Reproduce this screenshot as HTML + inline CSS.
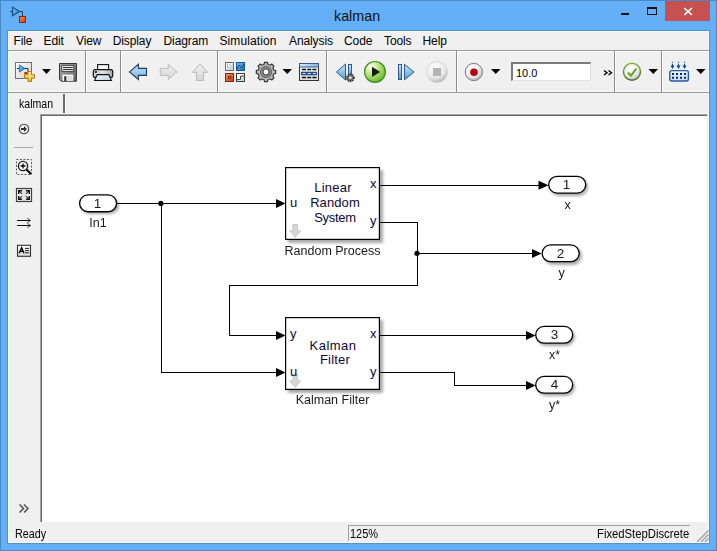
<!DOCTYPE html>
<html><head><meta charset="utf-8">
<style>
*{margin:0;padding:0;box-sizing:border-box}
html,body{width:717px;height:551px;overflow:hidden;background:#64b0f8}
body{position:relative;font-family:"Liberation Sans",sans-serif;font-size:12px;color:#000}
.a{position:absolute;white-space:nowrap}
#frame{left:0;top:0;width:717px;height:551px;background:#64b0f8;border:1px solid #4a88c4}
#iframe{left:7px;top:30px;width:703px;height:514px;border:1px solid #4a94dc}
#title{left:334px;top:8px;font-size:14.3px;color:#101010}
#client{left:8px;top:31px;width:701px;height:512px;background:#f0f0f0;border:1px solid #fafafa}
.menu{top:34px;font-size:12px;color:#000;letter-spacing:-0.1px}
.sep{background:#989898}
.tsep{position:absolute;top:51px;width:1px;height:41px;background:#8c8c8c;box-shadow:1px 0 0 #ffffff}
.st{font-size:12px;color:#000;top:527px;transform-origin:0 0}
svg{position:absolute;overflow:visible}
</style></head><body>
<div id="frame" class="a"></div>
<div id="iframe" class="a"></div>
<!-- title bar icon -->
<svg style="left:0;top:0" width="30" height="30">
 <defs><linearGradient id="tg" x1="0" y1="0" x2="1" y2="1"><stop offset="0" stop-color="#70d4f8"/><stop offset="1" stop-color="#1a78c0"/></linearGradient>
 <linearGradient id="rg" x1="0" y1="0" x2="1" y2="1"><stop offset="0" stop-color="#f89050"/><stop offset="1" stop-color="#d83a10"/></linearGradient></defs>
 <path d="M10 11.5H13M19 11.5H22.5V16" stroke="#3a3a3a" stroke-width="1" fill="none"/>
 <path d="M12.5 7.3L12.5 15.7L19.6 11.5Z" fill="url(#tg)" stroke="#14508a" stroke-width="1.2"/>
 <rect x="19.5" y="16.5" width="6" height="6" fill="url(#rg)" stroke="#8a2a08" stroke-width="1"/>
</svg>
<div id="title" class="a">kalman</div>
<!-- window buttons -->
<div class="a" style="left:621px;top:13px;width:8px;height:2px;background:#111"></div>
<div class="a" style="left:647px;top:7px;width:10px;height:8px;border:1px solid #111;border-top-width:2px"></div>
<div class="a" style="left:665px;top:1px;width:45px;height:20px;background:#c75050"></div>
<svg style="left:665px;top:1px" width="45" height="20"><path d="M19.3 7.2L26.9 13.9M26.9 7.2L19.3 13.9" stroke="#fff" stroke-width="1.55"/></svg>

<div id="client" class="a"></div>
<!-- menu -->
<div class="a menu" style="left:13.5px">File</div>
<div class="a menu" style="left:43.5px">Edit</div>
<div class="a menu" style="left:76px">View</div>
<div class="a menu" style="left:112.7px">Display</div>
<div class="a menu" style="left:163.5px">Diagram</div>
<div class="a menu" style="left:219.5px;letter-spacing:0.1px">Simulation</div>
<div class="a menu" style="left:289px">Analysis</div>
<div class="a menu" style="left:344px">Code</div>
<div class="a menu" style="left:384px">Tools</div>
<div class="a menu" style="left:422.5px">Help</div>
<div class="a sep" style="left:8px;top:50px;width:701px;height:1px"></div>
<div class="a" style="left:8px;top:51px;width:701px;height:1px;background:#fafafa"></div>
<div class="a" style="left:8px;top:91px;width:701px;height:1px;background:#fafafa"></div>
<!-- toolbar separators -->
<div class="tsep" style="left:85px"></div>
<div class="tsep" style="left:120px"></div>
<div class="tsep" style="left:217px"></div>
<div class="tsep" style="left:326px"></div>
<div class="tsep" style="left:456px"></div>
<div class="tsep" style="left:614px"></div>
<div class="tsep" style="left:661px"></div>
<div class="a sep" style="left:8px;top:92px;width:701px;height:1px"></div>

<!-- toolbar icons -->
<svg id="tb" style="left:0;top:0" width="717" height="100">
 <defs>
  <linearGradient id="g_box" x1="0" y1="0" x2="1" y2="1"><stop offset="0" stop-color="#ffffff"/><stop offset="1" stop-color="#d0d0d0"/></linearGradient>
  <linearGradient id="g_yel" x1="0" y1="0" x2="0" y2="1"><stop offset="0" stop-color="#fff6b0"/><stop offset="1" stop-color="#f0b820"/></linearGradient>
  <linearGradient id="g_blu" x1="0" y1="0" x2="0" y2="1"><stop offset="0" stop-color="#c8e4f8"/><stop offset="1" stop-color="#5a9ad0"/></linearGradient>
  <linearGradient id="g_gry" x1="0" y1="0" x2="0" y2="1"><stop offset="0" stop-color="#f0f0f0"/><stop offset="1" stop-color="#d4d4d4"/></linearGradient>
  <radialGradient id="g_grn" cx="0.3" cy="0.25" r="0.85"><stop offset="0" stop-color="#ffffff"/><stop offset="0.3" stop-color="#d0f0a0"/><stop offset="0.75" stop-color="#88cc48"/><stop offset="1" stop-color="#5aa82a"/></radialGradient>
  <radialGradient id="g_wht" cx="0.4" cy="0.3" r="0.7"><stop offset="0" stop-color="#ffffff"/><stop offset="0.7" stop-color="#e8e8e8"/><stop offset="1" stop-color="#b8b8b8"/></radialGradient>
  <radialGradient id="g_gear" cx="0.5" cy="0.5" r="0.5"><stop offset="0" stop-color="#505050"/><stop offset="0.5" stop-color="#a0a0a0"/><stop offset="1" stop-color="#707070"/></radialGradient>
 </defs>
 <!-- new model/library icon -->
 <rect x="15.5" y="62.5" width="16" height="16" fill="url(#g_box)" stroke="#707070"/>
 <path d="M17 68.5H19.5M24.5 68.5H28V72" stroke="#202020" fill="none"/>
 <linearGradient id="g_nt" x1="0" y1="0" x2="1" y2="1"><stop offset="0" stop-color="#70d0f8"/><stop offset="1" stop-color="#1a70c0"/></linearGradient>
 <path d="M19.3 64.8V72.2L25 68.5Z" fill="url(#g_nt)" stroke="#1a5a98" stroke-width="0.7"/>
 <rect x="24.3" y="72" width="3.2" height="2.4" fill="#d03010"/>
 <path d="M28 71.5H31.5V74.7H34.6V78.2H31.5V81.4H28V78.2H24.6V74.7H28Z" fill="url(#g_yel)" stroke="#a87010" stroke-width="0.9"/>
 <path d="M42 69H51L46.5 74Z" fill="#000"/>
 <!-- save -->
 <linearGradient id="g_fl" x1="0" y1="0" x2="1" y2="1"><stop offset="0" stop-color="#b4b4b4"/><stop offset="1" stop-color="#5a5a5a"/></linearGradient>
 <path d="M59.5 63.5H76.5V81.2H61.3L59.5 79.4Z" fill="url(#g_fl)" stroke="#383838"/>
 <rect x="61.8" y="65.3" width="12" height="6" fill="#ffffff" stroke="#303030" stroke-width="0.9"/>
 <path d="M63 67.4H72.8M63 69.4H72.8" stroke="#000" stroke-width="0.9"/>
 <rect x="62.5" y="74.6" width="10.8" height="6.2" fill="#ffffff"/>
 <rect x="64.3" y="76.2" width="2" height="4.8" fill="#202020"/>
 <rect x="67.2" y="75.6" width="5.4" height="4.6" fill="#dedede"/>
 <!-- print -->
 <linearGradient id="g_pr" x1="0" y1="0" x2="1" y2="0"><stop offset="0" stop-color="#c8c8c8"/><stop offset="0.5" stop-color="#e4e4e4"/><stop offset="1" stop-color="#a8a8a8"/></linearGradient>
 <linearGradient id="g_pt" x1="0" y1="0" x2="1" y2="1"><stop offset="0" stop-color="#f4f8fa"/><stop offset="1" stop-color="#b8d4e0"/></linearGradient>
 <rect x="97.6" y="64.6" width="11" height="5" fill="#f4f6f8" stroke="#101010" stroke-width="1.1"/>
 <path d="M95.2 69.6H110.8Q112.7 69.6 112.7 71.5V75.8Q112.7 77.4 111.2 77.4H94.8Q93.3 77.4 93.3 75.8V71.5Q93.3 69.6 95.2 69.6Z" fill="url(#g_pr)" stroke="#101010" stroke-width="1.2"/>
 <rect x="95" y="71.2" width="1.8" height="1.6" fill="#000"/>
 <path d="M97.2 74.6H108.8L111.4 80.5H94.6Z" fill="url(#g_pt)" stroke="#101010" stroke-width="1.1"/>
 <!-- back -->
 <linearGradient id="g_ba" x1="0" y1="0" x2="0" y2="1"><stop offset="0" stop-color="#c4e4f8"/><stop offset="1" stop-color="#78b0dc"/></linearGradient>
 <path d="M129.5 71.9L138.4 64.3V68.4H146.5V75.4H138.4V79.5Z" fill="url(#g_ba)" stroke="#22405e" stroke-width="1.1"/>
 <!-- forward disabled -->
 <path d="M177 71.9L168.3 64.5V68.4H160.3V75.4H168.3V79.4Z" fill="url(#g_gry)" stroke="#bcbcbc"/>
 <!-- up disabled -->
 <path d="M200 64L207.6 72.4H203.6V80.5H196.4V72.4H192.4Z" fill="url(#g_gry)" stroke="#bcbcbc"/>
 <!-- library browser -->
 <rect x="225.5" y="62.5" width="8" height="8" fill="#ffffff" stroke="#6a6a6a"/>
 <path d="M226 70L233 63.5V70Z" fill="#c4d8e6"/>
 <path d="M227.5 63.5V68M230 63.5V66" stroke="#9a9a9a" stroke-width="0.8"/>
 <rect x="225.5" y="62.5" width="8" height="8" fill="none" stroke="#6a6a6a"/>
 <linearGradient id="g_lb" x1="0" y1="0" x2="1" y2="1"><stop offset="0" stop-color="#70c4f0"/><stop offset="1" stop-color="#1a6ab8"/></linearGradient>
 <linearGradient id="g_lr" x1="0" y1="0" x2="1" y2="1"><stop offset="0" stop-color="#f8a070"/><stop offset="1" stop-color="#d03a10"/></linearGradient>
 <rect x="236.5" y="62.5" width="8" height="8" fill="url(#g_lb)" stroke="#1a5a98"/>
 <path d="M237.2 69Q238.8 63 240.5 66.5T243.8 64" stroke="#0a3a78" stroke-width="0.9" fill="none"/>
 <rect x="225.5" y="73.5" width="8" height="8" fill="url(#g_lr)" stroke="#8a2008"/>
 <rect x="228.3" y="76.3" width="2.4" height="2.4" fill="none" stroke="#802000" stroke-width="0.9"/>
 <rect x="236.5" y="73.5" width="8" height="8" fill="#ffffff" stroke="#3a3a3a"/>
 <path d="M237 81V79.5H240.5V76H244V81Z" fill="#c8dcea"/>
 <path d="M237 79.5H240.5V76H244" stroke="#3a3a3a" stroke-width="0.9" fill="none"/>
 <!-- gear -->
 <g transform="translate(266,72)">
  <path d="M-1.98 -7.75 L-1.49 -9.69 L1.49 -9.69 L1.98 -7.75 A8.0 8.0 0 0 1 4.08 -6.88 L5.79 -7.91 L7.91 -5.79 L6.88 -4.08 A8.0 8.0 0 0 1 7.75 -1.98 L9.69 -1.49 L9.69 1.49 L7.75 1.98 A8.0 8.0 0 0 1 6.88 4.08 L7.91 5.79 L5.79 7.91 L4.08 6.88 A8.0 8.0 0 0 1 1.98 7.75 L1.49 9.69 L-1.49 9.69 L-1.98 7.75 A8.0 8.0 0 0 1 -4.08 6.88 L-5.79 7.91 L-7.91 5.79 L-6.88 4.08 A8.0 8.0 0 0 1 -7.75 1.98 L-9.69 1.49 L-9.69 -1.49 L-7.75 -1.98 A8.0 8.0 0 0 1 -6.88 -4.08 L-7.91 -5.79 L-5.79 -7.91 L-4.08 -6.88 A8.0 8.0 0 0 1 -1.98 -7.75 Z" fill="#b8b8b8" stroke="#353535" stroke-width="1.15"/>
  <circle r="6" fill="#5a5a5a"/>
  <circle r="4.8" fill="#a4a4a4"/>
  <circle r="3.7" fill="#505050"/>
  <circle r="2.4" fill="#ffffff"/>
 </g>
 <path d="M282.5 69H292L287.25 74Z" fill="#000"/>
 <!-- model explorer -->
 <linearGradient id="g_me" x1="0" y1="0" x2="1" y2="0"><stop offset="0" stop-color="#d0ecfc"/><stop offset="1" stop-color="#78b8e4"/></linearGradient>
 <linearGradient id="g_mb" x1="0" y1="0" x2="0" y2="1"><stop offset="0" stop-color="#ffffff"/><stop offset="1" stop-color="#d8d8d8"/></linearGradient>
 <rect x="299.5" y="63.5" width="19" height="17" fill="url(#g_mb)" stroke="#303030"/>
 <rect x="299.5" y="63.5" width="19" height="3.5" fill="url(#g_me)" stroke="#3a5a80"/>
 <path d="M302 69.5H306M307.2 69.5H311.2M312.4 69.5H316.4M302 77.5H306M307.2 77.5H311.2M312.4 77.5H316.4" stroke="#101010" stroke-width="1.5"/>
 <rect x="301" y="71.8" width="16" height="3.4" rx="0.8" fill="#1a4a90"/>
 <path d="M302.5 73.5H305.5M307.7 73.5H310.7M312.9 73.5H315.9" stroke="#e8e8f0" stroke-width="1.2"/>
 <!-- step back -->
 <path d="M336.5 72L345.5 64V80Z" fill="url(#g_blu)" stroke="#2a5a90"/>
 <rect x="348.5" y="64.5" width="3" height="12" fill="url(#g_blu)" stroke="#2a5a90"/>
 <circle cx="350.3" cy="77.8" r="3.6" fill="#707070" stroke="#303030" stroke-width="1.6" stroke-dasharray="1.3 1"/>
 <circle cx="350.3" cy="77.8" r="1.3" fill="#f0f0f0"/>
 <!-- run -->
 <circle cx="375" cy="71.9" r="10.4" fill="url(#g_grn)" stroke="#3c8c22" stroke-width="1.2"/>
 <path d="M372 66.8L380.2 71.9L372 77Z" fill="#1a1a1a"/>
 <!-- step forward -->
 <rect x="398.5" y="64.5" width="3" height="15" fill="url(#g_blu)" stroke="#2a5a90"/>
 <path d="M404.5 64.3L414 72L404.5 79.8Z" fill="url(#g_blu)" stroke="#2a5a90"/>
 <!-- stop disabled -->
 <circle cx="437" cy="72" r="10.5" fill="url(#g_wht)" stroke="#d0d0d0" stroke-width="0.8"/>
 <rect x="433" y="68" width="8" height="8" fill="#b4b4b4"/>
 <!-- record -->
 <circle cx="473.8" cy="72" r="8.6" fill="url(#g_wht)" stroke="#7a7a7a" stroke-width="1"/>
 <circle cx="474" cy="72.2" r="3.8" fill="#b80010"/>
 <path d="M491 69H500.5L495.75 74Z" fill="#000"/>
 <!-- check -->
 <linearGradient id="g_cks" x1="0" y1="0" x2="0" y2="1"><stop offset="0" stop-color="#78b438"/><stop offset="1" stop-color="#4a6a22"/></linearGradient>
 <circle cx="632" cy="71.8" r="8.5" fill="url(#g_wht)" stroke="url(#g_cks)" stroke-width="1.4"/>
 <path d="M627.9 72.6L631 75.6L636.3 68.6" stroke="#6aa830" stroke-width="2.2" fill="none"/>
 <path d="M648.5 69H658L653.25 74Z" fill="#000"/>
 <!-- keyboard icon -->
 <path d="M672.5 61.8V62.8M678.5 61.8V62.8M684.5 61.8V62.8" stroke="#1a4a80" stroke-width="1.2"/>
 <path d="M672.5 63.8V66.5M678.5 63.8V66.5M684.5 63.8V66.5" stroke="#1a4a80" stroke-width="1.1"/>
 <path d="M670.4 65.5L672.5 69L674.6 65.5ZM676.4 65.5L678.5 69L680.6 65.5ZM682.4 65.5L684.5 69L686.6 65.5Z" fill="#1a4a80"/>
 <linearGradient id="g_kb" x1="0" y1="0" x2="0" y2="1"><stop offset="0" stop-color="#eef6fe"/><stop offset="1" stop-color="#c4dcf4"/></linearGradient>
 <rect x="669.8" y="70.6" width="18.6" height="10.4" rx="2" fill="url(#g_kb)" stroke="#2a5a98" stroke-width="1.4"/>
 <path d="M672 74H674M676 74H678M680 74H682M684 74H686M672 77.8H674M676 77.8H678M680 77.8H682M684 77.8H686" stroke="#0a2a60" stroke-width="2"/>
 <path d="M696 69H705.5L700.75 74Z" fill="#000"/>
 <!-- chevrons -->
 <path d="M604 70.5L607 72.75L604 75M608.5 70.5L611.5 72.75L608.5 75" stroke="#000" stroke-width="1.4" fill="none"/>
</svg>
<!-- stop time box -->
<div class="a" style="left:511px;top:62px;width:80px;height:19px;background:#fff;border:2px solid #7a7a7a;border-right:1px solid #e4e4e4;border-bottom:1px solid #e4e4e4"></div>
<div class="a" style="left:516px;top:66.5px;font-size:11px;color:#000">10.0</div>

<!-- tab -->
<div class="a" style="left:19px;top:97px;font-size:12px;transform:scaleX(0.88);transform-origin:0 0">kalman</div>
<div class="a" style="left:63px;top:94px;width:2px;height:19px;background:#6e6e6e;box-shadow:1px 0 0 #fafafa"></div>
<div class="a" style="left:65px;top:113px;width:643px;height:1px;background:#fafafa"></div>

<!-- left palette -->
<svg style="left:0;top:0" width="45" height="551">
 <circle cx="24" cy="129" r="4.7" fill="#f4f4f4" stroke="#404040" stroke-width="1.1"/>
 <path d="M21 128H24V126L27 129L24 132V130H21Z" fill="#303030"/>
 <path d="M14 147.5H33" stroke="#a8a8a8"/>
 <rect x="16.5" y="159.5" width="15" height="15" fill="none" stroke="#606060" stroke-dasharray="2 1.5"/>
 <circle cx="23" cy="166" r="4.6" fill="#fff" stroke="#202020" stroke-width="1.4"/>
 <path d="M20.5 166H25.5M23 163.5V168.5" stroke="#000" stroke-width="1.3"/>
 <path d="M26.5 169.5L31 174" stroke="#000" stroke-width="2"/>
  <linearGradient id="g_fit" x1="0" y1="0" x2="1" y2="0"><stop offset="0" stop-color="#ffffff"/><stop offset="0.5" stop-color="#e0e0e0"/><stop offset="1" stop-color="#ffffff"/></linearGradient>
 <rect x="16.5" y="188.5" width="15" height="13" fill="url(#g_fit)" stroke="#404040" stroke-width="1.2"/>
 <path d="M19 190.8L22 193.8M29 190.8L26 193.8M19 199.2L22 196.2M29 199.2L26 196.2" stroke="#303030" stroke-width="1.1"/>
 <path d="M18.7 194V190.7H22M29.3 194V190.7H26M18.7 196V199.3H22M29.3 196V199.3H26" stroke="#151515" stroke-width="1.5" fill="none"/>
 <path d="M17 220.5H30M17 225.5H30" stroke="#101010" stroke-width="1.2"/>
 <path d="M27.3 218.3L30.6 220.5L27.3 222.7M27.3 223.3L30.6 225.5L27.3 227.7" stroke="#303030" stroke-width="0.9" fill="none"/>
 <linearGradient id="g_ann" x1="0" y1="0" x2="0" y2="1"><stop offset="0" stop-color="#ffffff"/><stop offset="1" stop-color="#d8d8d8"/></linearGradient>
 <rect x="17.5" y="245.3" width="13" height="11" fill="url(#g_ann)" stroke="#303030" stroke-width="1.1"/>
 <path d="M19.2 253.2L21.6 247.8L24 253.2M20.2 251.4H23" stroke="#000" stroke-width="1.4" fill="none"/>
 <path d="M25 248.4H29M25 250.6H29M25 252.8H29" stroke="#202020" stroke-width="1"/>
 <path d="M19.5 504.5L23.5 508.5L19.5 512.5M24 504.5L28 508.5L24 512.5" stroke="#505050" stroke-width="1.5" fill="none"/>
</svg>

<!-- canvas -->
<div class="a" style="left:40px;top:114px;width:668px;height:408px;background:#fff;border-left:1px solid #a0a0a0;border-top:1px solid #a0a0a0;border-right:1px solid #ececec"></div>
<div class="a" style="left:41px;top:115px;width:666px;height:407px;background:#fff;border-left:1px solid #696969;border-top:1px solid #696969"></div>

<!-- diagram -->
<svg style="left:0;top:0" width="717" height="551">
 <defs>
  <filter id="sh" x="-20%" y="-20%" width="150%" height="150%"><feGaussianBlur stdDeviation="1.6"/></filter>
 </defs>
 <!-- shadows -->
 <rect x="288" y="170" width="95" height="73" fill="#a8a8a8" filter="url(#sh)"/>
 <rect x="288" y="320" width="95" height="73" fill="#a8a8a8" filter="url(#sh)"/>
 <rect x="81" y="197" width="38" height="17" rx="8.5" fill="#a8a8a8" filter="url(#sh)"/>
 <rect x="550" y="178" width="38" height="18" rx="9" fill="#a8a8a8" filter="url(#sh)"/>
 <rect x="544" y="247" width="38" height="18" rx="9" fill="#a8a8a8" filter="url(#sh)"/>
 <rect x="537" y="328" width="38" height="18" rx="9" fill="#a8a8a8" filter="url(#sh)"/>
 <rect x="537" y="378" width="38" height="18" rx="9" fill="#a8a8a8" filter="url(#sh)"/>
 <!-- blocks -->
 <rect x="285.6" y="167.6" width="93.8" height="71.8" fill="#fff" stroke="#000" stroke-width="1.2"/>
 <rect x="285.6" y="317.6" width="93.8" height="71.8" fill="#fff" stroke="#000" stroke-width="1.2"/>
 <!-- pills -->
 <rect x="79.6" y="194.9" width="37" height="16.8" rx="8.4" fill="#fff" stroke="#000" stroke-width="1.35"/>
 <rect x="548.7" y="176.3" width="37" height="16.8" rx="8.4" fill="#fff" stroke="#000" stroke-width="1.35"/>
 <rect x="542.2" y="244.9" width="37" height="16.8" rx="8.4" fill="#fff" stroke="#000" stroke-width="1.35"/>
 <rect x="535.7" y="326.4" width="37" height="16.8" rx="8.4" fill="#fff" stroke="#000" stroke-width="1.35"/>
 <rect x="535.7" y="376.4" width="37" height="16.8" rx="8.4" fill="#fff" stroke="#000" stroke-width="1.35"/>
 <!-- lines -->
 <g stroke="#000" stroke-width="1" fill="none" shape-rendering="crispEdges">
  <path d="M117 203.5H277"/>
  <path d="M161.5 203.5V372.5H277"/>
  <path d="M380 185.5H540"/>
  <path d="M380 222.5H417.5V285.5H229.5V335.5H277"/>
  <path d="M417.5 253.5H533"/>
  <path d="M380 335.5H527"/>
  <path d="M380 372.5H454.5V385.5H527"/>
 </g>
 <!-- arrows -->
 <g fill="#000">
  <path d="M276 199L285.5 203.5L276 208Z"/>
  <path d="M276 368L285.5 372.5L276 377Z"/>
  <path d="M276 331L285.5 335.5L276 340Z"/>
  <path d="M538.5 180.8L548.5 185.3L538.5 189.8Z"/>
  <path d="M532 249L541.5 253.5L532 258Z"/>
  <path d="M526 331L535.5 335.5L526 340Z"/>
  <path d="M526 381L535.5 385.5L526 390Z"/>
  <circle cx="160.9" cy="203.4" r="2.6"/>
  <circle cx="417" cy="253.4" r="2.6"/>
 </g>
 <!-- discrete arrows (gray) -->
 <path d="M292.8 224.5H297.6V230.8H300.6L295.2 237.5L289.6 230.8H292.8Z" fill="#d6d6d6" stroke="#bcbcbc" stroke-width="0.7"/>
 <path d="M292.8 374.5H297.6V380.8H300.6L295.2 387.5L289.6 380.8H292.8Z" fill="#d6d6d6" stroke="#bcbcbc" stroke-width="0.7"/>
 <!-- block texts -->
 <g font-family="Liberation Sans" font-size="13" fill="#0c0838">
  <text x="333" y="192" text-anchor="middle" letter-spacing="0.2">Linear</text>
  <text x="335" y="207" text-anchor="middle" letter-spacing="0.1">Random</text>
  <text x="335" y="222" text-anchor="middle" letter-spacing="-0.3">System</text>
  <text x="290" y="207">u</text>
  <text x="370" y="188">x</text>
  <text x="370" y="225">y</text>
  <text x="333" y="349.8" text-anchor="middle" letter-spacing="0.45">Kalman</text>
  <text x="335" y="364.2" text-anchor="middle" letter-spacing="0.2">Filter</text>
  <text x="290" y="338">y</text>
  <text x="290" y="376">u</text>
  <text x="370" y="338">x</text>
  <text x="370" y="376">y</text>
 </g>

</svg>

<svg style="left:0;top:0;will-change:transform" width="717" height="551">
 <g font-family="Liberation Sans" font-size="12.5" fill="#1a1a1a" text-anchor="middle">
  <text x="97.6" y="207.7" font-size="13.5">1</text>
  <text x="98" y="227">In1</text>
  <text x="332.5" y="254.5">Random Process</text>
  <text x="332.5" y="403.9">Kalman Filter</text>
  <text x="566.4" y="188.6" font-size="13.5">1</text>
  <text x="567.5" y="208.5">x</text>
  <text x="560.4" y="257.8" font-size="13.5">2</text>
  <text x="561.5" y="277">y</text>
  <text x="554.5" y="338.7" font-size="13.5">3</text>
  <text x="554.5" y="359">x*</text>
  <text x="554.5" y="388.7" font-size="13.5">4</text>
  <text x="554.5" y="409">y*</text>
 </g>
</svg>
<!-- status bar -->
<div class="a st" style="left:14.5px;transform:scaleX(0.9)">Ready</div>
<div class="a" style="left:348px;top:525px;width:342px;height:16px;border-left:1px solid #a0a0a0;border-top:1px solid #a0a0a0"></div>
<div class="a st" style="left:350px;transform:scaleX(0.915)">125%</div>
<div class="a st" style="left:596.5px;transform:scaleX(0.94)">FixedStepDiscrete</div>
<svg style="left:0;top:0" width="717" height="551">
 <path d="M708.5 530.5L697 542M708.5 534.5L701 542M708.5 538.5L705 542" stroke="#a4a4a4" stroke-width="1.5"/>
</svg>
</body></html>
